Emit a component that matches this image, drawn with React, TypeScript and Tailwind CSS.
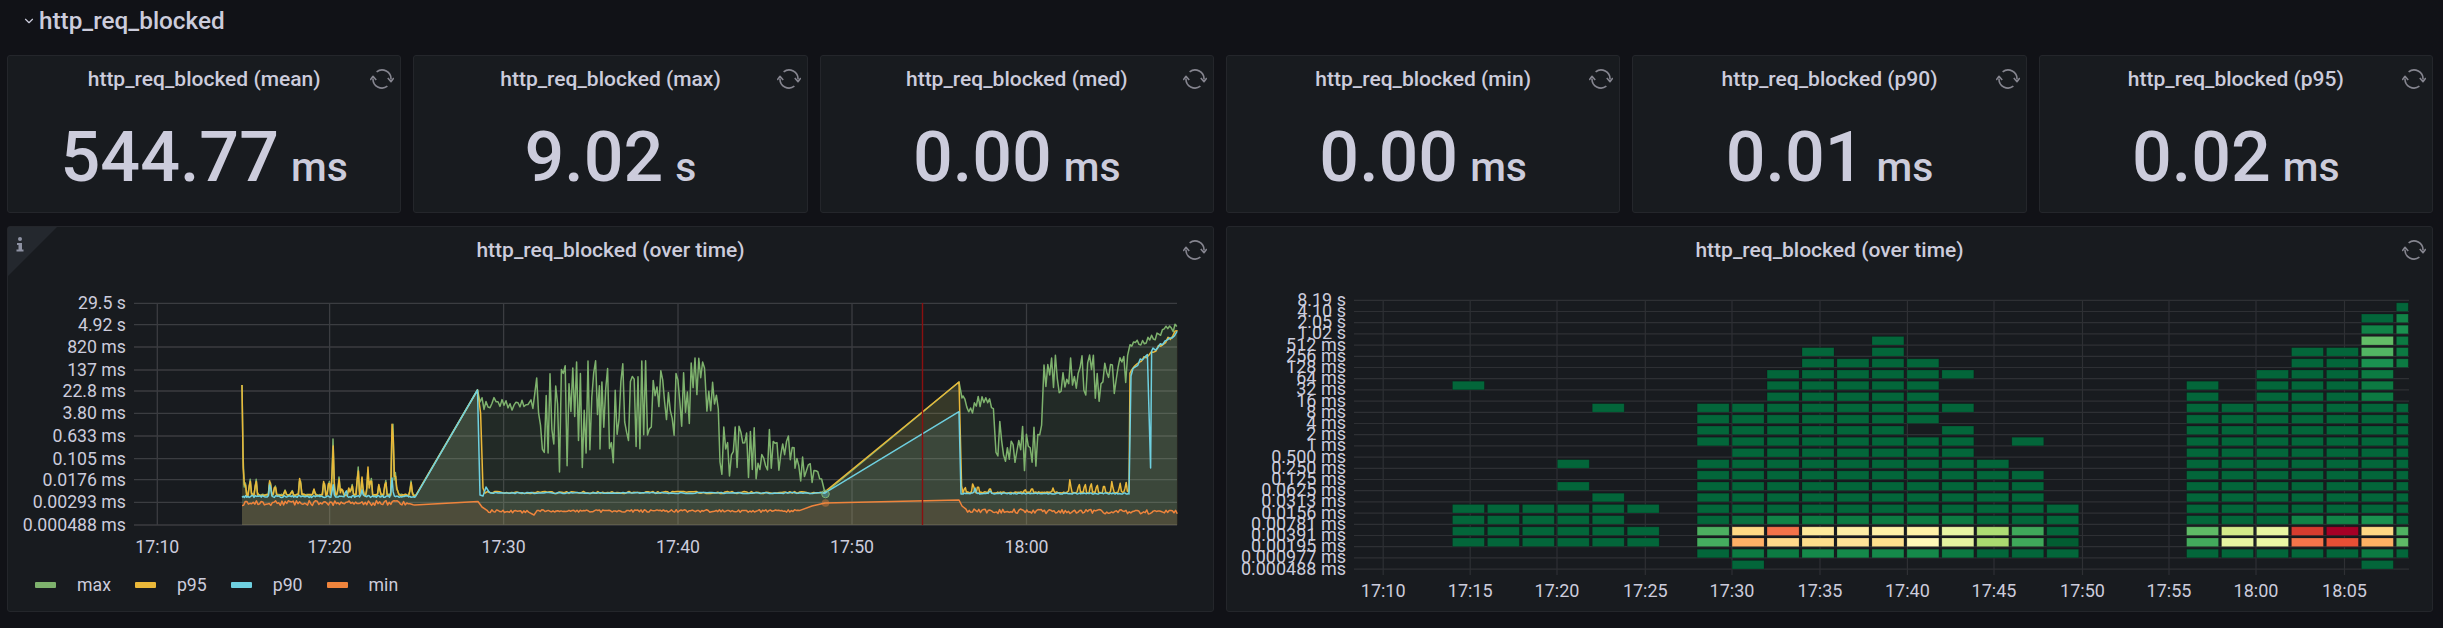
import { ChevronDown } from "lucide-react";

type Point = [number, number];

const TEXT = "#ccccdc";
const BASELINE = 525;

let seed = 7;
function rnd() {
  seed = (seed * 16807) % 2147483647;
  return (seed % 10000) / 10000;
}

function lerp(a: number, b: number, t: number) {
  return a + (b - a) * t;
}

function noisy(x0: number, x1: number, y0: number, y1: number, amp: number, step = 2.2): Point[] {
  const out: Point[] = [];
  for (let x = x0; x < x1; x += step) {
    out.push([x, lerp(y0, y1, (x - x0) / (x1 - x0)) + (rnd() - 0.5) * amp]);
  }
  return out;
}

function wild(x0: number, x1: number, hi0: number, hi1: number, lo0: number, lo1: number, step = 1.9): Point[] {
  const out: Point[] = [];
  let i = 0;
  for (let x = x0; x < x1; x += step) {
    const t = (x - x0) / (x1 - x0);
    const hi = lerp(hi0, hi1, t);
    const lo = lerp(lo0, lo1, t);
    const r = rnd();
    out.push([x, i % 2 === 0 ? hi + (lo - hi) * r * r * 0.8 : lo - (lo - hi) * r * 0.9]);
    i++;
  }
  return out;
}

function spiky(x0: number, x1: number, base: number, amp: number, spikes: Point[]): Point[] {
  const out: Point[] = [];
  for (let x = x0; x < x1; x += 1.2) {
    let y = base + (rnd() - 0.5) * amp;
    for (const [sx, sy] of spikes) {
      const d = Math.abs(x - sx);
      if (d < 1.6) y = Math.min(y, lerp(sy, base, d / 1.6));
    }
    out.push([x, y]);
  }
  return out;
}

const p95First: Point[] = [
  [242, 385], [245, 479], [250, 477], [256, 477], [270, 476], [275, 483], [285, 490], [292, 490],
  [300, 473], [314, 489], [324, 477], [329, 477], [333, 439], [339, 477], [342, 487], [349, 487],
  [352, 483], [358, 463], [362, 477], [368, 467], [371, 473], [379, 483], [385.5, 477], [392.5, 392],
  [395, 465], [397, 487], [411, 481],
];

const p95Last: Point[] = [
  [965, 486], [973, 481], [978, 484], [990, 487], [1025, 489], [1032, 487], [1053, 488], [1070, 478],
  [1079, 482], [1085, 482], [1091, 481], [1097, 483], [1104, 483], [1112, 480], [1120, 482], [1126, 481],
];

const maxSeries: Point[] = [
  [242, 385], ...spiky(243, 416, 495, 2, p95First),
  [477.5, 390], [480, 402], ...noisy(482, 530, 403, 405, 14, 2),
  ...wild(531, 600, 362, 360, 476, 470),
  ...wild(600, 705, 365, 355, 470, 430),
  ...wild(705, 720, 370, 378, 415, 425),
  ...wild(720, 795, 425, 430, 478, 482),
  ...wild(795, 822, 440, 475, 485, 490),
  [825, 493], [959, 382], [962, 398],
  ...wild(963, 995, 396, 397, 414, 413),
  ...wild(996, 1042, 420, 425, 473, 475),
  ...wild(1044, 1128, 355, 355, 405, 410),
  ...noisy(1130, 1178, 348, 325, 10, 1.8),
];

const p95Series: Point[] = [
  ...spiky(242, 416, 495, 2, p95First),
  [477.5, 390], [480.6, 413], [483, 488], ...noisy(485, 825, 492.5, 492.5, 2.2, 2.4),
  [959, 382], [961.6, 486], ...spiky(963, 1129, 492.5, 1.5, p95Last),
  [1129, 490], [1130, 373], ...noisy(1132, 1178, 369, 331, 5, 2.4),
];

const p90Series: Point[] = [
  ...spiky(242, 416, 496.5, 2, [[270, 481], [333, 483], [346, 489], [392, 478], [362, 490]]),
  [477.5, 390], [480, 495], [483, 496], [486, 487], [489, 492], ...noisy(491, 825, 493, 493, 1.2, 2.4),
  [959, 411.7], [961, 494], ...spiky(963, 1129, 493.5, 1.2, [[975, 488], [990, 490]]),
  [1129, 494], [1131, 376], ...noisy(1133, 1149.5, 368, 352, 4, 2.4), [1150.6, 468], [1151.6, 351],
  ...noisy(1153, 1178, 350, 332, 4, 2.4),
];

const minSeries: Point[] = [
  ...noisy(242, 416, 503, 503, 5, 1.6),
  [478, 501.5], [482, 507], ...noisy(487, 530, 511, 512, 3, 1.6), [534, 515],
  ...noisy(537, 800, 511, 511, 2.6, 1.6), [812, 506], [825, 503], [959, 500], [962, 506],
  ...noisy(966, 1178, 511, 512, 4.5, 1.6),
];

const series = [
  { color: "#7eb26d", points: maxSeries },
  { color: "#eab839", points: p95Series },
  { color: "#6ed0e0", points: p90Series },
  { color: "#ef843c", points: minSeries },
];

function line(points: Point[]) {
  return "M" + points.map(([x, y]) => `${x.toFixed(1)} ${y.toFixed(1)}`).join("L");
}

function area(points: Point[]) {
  return `${line(points)}L${points[points.length - 1][0].toFixed(1)} ${BASELINE}L${points[0][0].toFixed(1)} ${BASELINE}Z`;
}

const graphY = [
  ["29.5 s", 303.3], ["4.92 s", 324.7], ["820 ms", 347], ["137 ms", 370], ["22.8 ms", 391], ["3.80 ms", 413.3],
  ["0.633 ms", 436], ["0.105 ms", 458.7], ["0.0176 ms", 479.7], ["0.00293 ms", 502.3], ["0.000488 ms", 525],
] as const;

const graphX = [
  ["17:10", 157.3], ["17:20", 329.6], ["17:30", 503.6], ["17:40", 678], ["17:50", 852], ["18:00", 1026.5],
] as const;

const heatY = [
  "8.19 s", "4.10 s", "2.05 s", "1.02 s", "512 ms", "256 ms", "128 ms", "64 ms", "32 ms", "16 ms", "8 ms", "4 ms",
  "2 ms", "1 ms", "0.500 ms", "0.250 ms", "0.125 ms", "0.0625 ms", "0.0313 ms", "0.0156 ms", "0.00781 ms",
  "0.00391 ms", "0.00195 ms", "0.000977 ms", "0.000488 ms",
];

const heatX = [
  ["17:10", 1383.2], ["17:15", 1470.2], ["17:20", 1557], ["17:25", 1645.3], ["17:30", 1732], ["17:35", 1820],
  ["17:40", 1907.4], ["17:45", 1994], ["17:50", 2082.5], ["17:55", 2169], ["18:00", 2256], ["18:05", 2344.5],
] as const;

function range(a: number, b: number) {
  const out: number[] = [];
  for (let k = a; k <= b; k++) out.push(k);
  return out;
}

type Column = { col: number; rows: number[]; colors?: Record<number, string> };

const MID = "#0c7a42";
const LIT = "#15894a";

const columns: Column[] = [
  { col: 0, rows: [8, ...range(19, 22)] },
  { col: 1, rows: range(19, 22) },
  { col: 2, rows: range(19, 22) },
  { col: 3, rows: [15, 17, ...range(19, 22)] },
  { col: 4, rows: [10, 18, ...range(19, 22)] },
  { col: 5, rows: [19, 21, 22] },
  { col: 7, rows: [...range(10, 13), ...range(15, 23)], colors: { 21: "#4caf60", 22: "#45ad5f" } },
  { col: 8, rows: range(10, 24), colors: { 20: "#0a7040", 21: "#ffd985", 22: "#ffb066", 23: MID } },
  { col: 9, rows: range(7, 23), colors: { 20: "#118347", 21: "#f4724a", 22: "#ffd98a", 23: MID } },
  { col: 10, rows: range(5, 23), colors: { 20: MID, 21: "#fee99b", 22: "#fedd8c", 23: LIT } },
  { col: 11, rows: range(6, 23), colors: { 20: MID, 21: "#feeea5", 22: "#fee396", 23: LIT } },
  { col: 12, rows: range(4, 23), colors: { 20: MID, 21: "#fff1a8", 22: "#fde08d", 23: LIT } },
  { col: 13, rows: [...range(6, 11), ...range(13, 23)], colors: { 20: MID, 21: "#fff2a8", 22: "#fff9b8", 23: LIT } },
  { col: 14, rows: [7, 10, ...range(12, 23)], colors: { 20: MID, 21: "#e8f5a4", 22: "#e4f3a0", 23: MID } },
  { col: 15, rows: range(15, 23), colors: { 21: "#aedd74", 22: "#a9da70" } },
  { col: 16, rows: [13, ...range(16, 23)], colors: { 21: "#3fa85a", 22: "#3fa85a" } },
  { col: 17, rows: range(19, 23), colors: { 22: "#025d32" } },
  { col: 21, rows: range(8, 23), colors: { 21: "#5fba66", 22: "#43aa5c" } },
  { col: 22, rows: range(10, 23), colors: { 21: "#d4ea8a", 22: "#e6f5a2" } },
  { col: 23, rows: range(7, 23), colors: { 21: "#e9f6a2", 22: "#eaf7a4" } },
  { col: 24, rows: range(5, 23), colors: { 20: "#118347", 21: "#d73c2f", 22: "#f4744a" } },
  { col: 25, rows: range(5, 23), colors: { 20: "#118347", 21: "#a50026", 22: "#e74f35" } },
  {
    col: 26,
    rows: range(2, 24),
    colors: { 3: "#118347", 4: "#63bd67", 5: "#52b563", 6: "#1a9150", 7: MID, 8: MID, 9: MID, 20: "#1a9150", 21: "#fed884", 22: "#fdb163", 23: MID },
  },
  {
    col: 27,
    rows: [...range(1, 6), ...range(10, 23)],
    colors: { 2: "#118347", 3: "#1a9150", 4: MID, 5: MID, 6: MID, 21: "#4fb261", 22: "#5fba66" },
  },
];

function SyncIcon() {
  return (
    <svg className="absolute right-[6px] top-[12px] h-[22px] w-[24px]" viewBox="0 0 24 22" fill="none" stroke="#85858f" strokeWidth="1.6">
      <path d="M6.6 3.8A9 9 0 0 1 21 11.5" />
      <path d="M17.4 18.2A9 9 0 0 1 3 10.5" />
      <path d="M17.8 10l3.2 3.7 2.8-3.7" strokeLinejoin="round" />
      <path d="M6.2 12L3 8.3.2 12" strokeLinejoin="round" />
    </svg>
  );
}

function Panel({ title, className, children }: { title: string; className: string; children?: React.ReactNode }) {
  return (
    <section className={`relative flex flex-col rounded-[3px] border border-[#24262b] bg-[#181b1f] ${className}`}>
      <h2 className="flex h-[48px] shrink-0 items-center justify-center text-[21px] font-medium text-[#ccccdc]">{title}</h2>
      <SyncIcon />
      {children}
    </section>
  );
}

function StatPanel({ title, value, unit }: { title: string; value: string; unit: string }) {
  return (
    <Panel title={title} className="h-[158px]">
      <div className="mt-[13px] flex items-baseline justify-center font-medium leading-[80px] text-[#ccccdc]">
        <span className="text-[70px]">{value}</span>
        <span className="ml-[12px] text-[41px]">{unit}</span>
      </div>
    </Panel>
  );
}

function GraphChart() {
  return (
    <svg className="block" width={1205} height={289} viewBox="8 275 1205 289" fontSize="17.7">
      {graphY.map(([label, y]) => (
        <g key={label}>
          <line x1={134} x2={1177} y1={y} y2={y} stroke="#3b3d41" strokeWidth="1.3" />
          <text x={126} y={y + 6} fill={TEXT} textAnchor="end">{label}</text>
        </g>
      ))}
      {graphX.map(([label, x]) => (
        <g key={label}>
          <line x1={x} x2={x} y1={303} y2={525} stroke="#3b3d41" strokeWidth="1.3" />
          <text x={x} y={553} fill={TEXT} textAnchor="middle">{label}</text>
        </g>
      ))}
      {series.map((s) => (
        <path key={s.color + "a"} d={area(s.points)} fill={s.color} fillOpacity="0.1" />
      ))}
      {series.map((s) => (
        <path key={s.color} d={line(s.points)} fill="none" stroke={s.color} strokeWidth="1.5" strokeLinejoin="round" />
      ))}
      <line x1={922.5} x2={922.5} y1={303} y2={525} stroke="#8a1010" strokeWidth="1.4" />
      <circle cx={825.5} cy={494} r={3.8} fill="#6ed0e0" fillOpacity="0.35" stroke="#7eb26d" strokeWidth="1" />
      <circle cx={825.5} cy={503} r={3.8} fill="#ef843c" fillOpacity="0.4" />
    </svg>
  );
}

function HeatmapChart() {
  return (
    <svg className="block" width={1205} height={336} viewBox="1227 275 1205 336" fontSize="18">
      {heatY.map((label, i) => {
        const y = 300.3 + 11.2 * i;
        return (
          <g key={label}>
            <line x1={1354} x2={2409} y1={y} y2={y} stroke="#2e3034" strokeWidth="1.2" />
            <text x={1346} y={y + 5.5} fill={TEXT} textAnchor="end">{label}</text>
          </g>
        );
      })}
      {heatX.map(([label, x]) => (
        <g key={label}>
          <line x1={x} x2={x} y1={300} y2={575} stroke="#2e3034" strokeWidth="1.2" />
          <text x={x} y={597} fill={TEXT} textAnchor="middle">{label}</text>
        </g>
      ))}
      {columns.map(({ col, rows, colors }) =>
        rows.map((k) => (
          <rect
            key={`${col}-${k}`}
            x={1452.4 + 34.96 * col}
            y={302.8 + (k - 1) * 11.2}
            width={col === 27 ? 12 : 32}
            height={8.6}
            fill={colors?.[k] ?? "#03663a"}
            stroke="#000"
            strokeOpacity="0.22"
            strokeWidth="0.8"
          />
        ))
      )}
    </svg>
  );
}

const stats = [
  { name: "mean", value: "544.77", unit: "ms" },
  { name: "max", value: "9.02", unit: "s" },
  { name: "med", value: "0.00", unit: "ms" },
  { name: "min", value: "0.00", unit: "ms" },
  { name: "p90", value: "0.01", unit: "ms" },
  { name: "p95", value: "0.02", unit: "ms" },
];

const legend = [
  { name: "max", swatch: "bg-[#7eb26d]" },
  { name: "p95", swatch: "bg-[#eab839]" },
  { name: "p90", swatch: "bg-[#6ed0e0]" },
  { name: "min", swatch: "bg-[#ef843c]" },
];

export default function App() {
  return (
    <div className="h-[628px] w-full overflow-hidden bg-[#111217] pl-[7px] pr-[10px] font-['Roboto',sans-serif] text-[#ccccdc]">
      <header className="flex h-[55px] items-center pb-[13px] pl-[15px]">
        <ChevronDown className="h-[14px] w-[14px]" strokeWidth={2} />
        <h1 className="ml-[3px] text-[24.3px] font-medium">http_req_blocked</h1>
      </header>

      <div className="grid grid-cols-6 gap-3">
        {stats.map((s) => (
          <StatPanel key={s.name} title={`http_req_blocked (${s.name})`} value={s.value} unit={s.unit} />
        ))}
      </div>

      <div className="mt-[13px] grid grid-cols-2 gap-3">
        <Panel title="http_req_blocked (over time)" className="h-[386px]">
          <svg className="absolute left-0 top-0 h-[49px] w-[49px]" viewBox="0 0 49 49">
            <path d="M0 0H49L0 49Z" fill="#24282e" />
            <circle cx="12" cy="12" r="2" fill="#8e92a3" />
            <path d="M9 16h5v6.5h1.5v2h-7v-2H10.5v-4.5H9Z" fill="#8e92a3" />
          </svg>
          <GraphChart />
          <div className="flex h-[42px] items-center pl-[27px] text-[17.7px]">
            {legend.map((l) => (
              <div key={l.name} className="mr-[24px] flex items-center">
                <span className={`h-[6px] w-[21px] rounded-[1px] ${l.swatch}`} />
                <span className="ml-[21px]">{l.name}</span>
              </div>
            ))}
          </div>
        </Panel>
        <Panel title="http_req_blocked (over time)" className="h-[386px]">
          <HeatmapChart />
        </Panel>
      </div>
    </div>
  );
}
